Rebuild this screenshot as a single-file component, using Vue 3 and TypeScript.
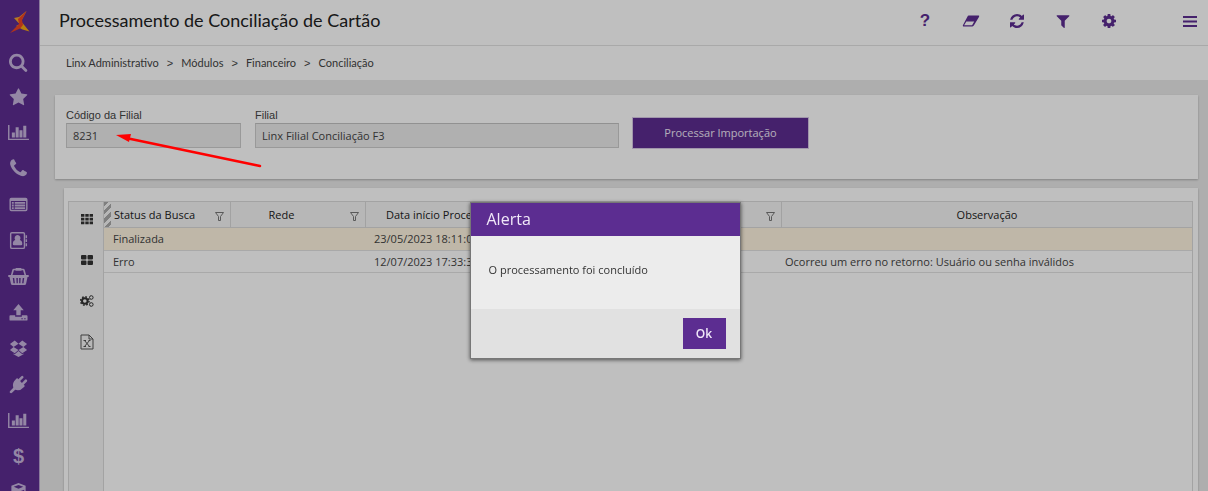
<script setup lang="ts">
import { ref } from 'vue'

interface Glyph {
  box: string
  d: string
  text?: string
}

const glyphs: Record<string, Glyph> = {
  search: {
    box: '64 64 1728 1728',
    d: 'M1216 832q0-185-131.5-316.5t-316.5-131.5-316.5 131.5-131.5 316.5 131.5 316.5 316.5 131.5 316.5-131.5 131.5-316.5zm512 832q0 52-38 90t-90 38q-54 0-90-38l-343-342q-179 124-399 124-143 0-273.5-55.5t-225-150-150-225-55.5-273.5 55.5-273.5 150-225 225-150 273.5-55.5 273.5 55.5 225 150 150 225 55.5 273.5q0 220-124 399l343 343q37 37 37 90z',
  },
  star: {
    box: '0 0 1792 1792',
    d: 'M1728 647q0 22-26 48l-363 354 86 500q1 7 1 20 0 21-10.5 35.5t-30.5 14.5q-19 0-40-12l-449-236-449 236q-22 12-40 12-21 0-31.5-14.5t-10.5-35.5q0-6 2-20l86-500-364-354q-25-27-25-48 0-37 56-46l502-73 225-455q19-41 49-41t49 41l225 455 502 73q56 9 56 46z',
  },
  chart: {
    box: '0 0 22 20',
    d: 'M0 2H1.5V16.5H22V18H0ZM4 10H7.200V15.300H4ZM8 4.500H11.200V15.300H8ZM12 7.500H15.200V15.300H12ZM16 3H19.200V15.300H16Z',
  },
  phone: {
    box: '100 100 1592 1592',
    d: 'M1600 1240q0 27-10 70.5t-21 68.5q-21 50-122 106-94 51-186 51-27 0-53-3.5t-57.5-12.5-47-14.5-55.5-20.5-49-18q-98-35-175-83-127-79-264-216t-216-264q-48-77-83-175-3-9-18-49t-20.5-55.5-14.5-47-12.5-57.5-3.500-53q0-92 51-186 56-101 106-122 25-11 68.500-21t70.500-10q14 0 21 3 18 6 53 76 11 19 30 54t35 63.500 31 53.500q3 4 17.500 25t21.500 35.500 7 28.500q0 20-28.500 50t-62 55-62 53-28.500 46q0 9 5 22.500t8.500 20.500 14 24 11.500 19q76 137 174 235t235 174q2 1 19 11.500t24 14 20.500 8.500 22.500 5q18 0 46-28.500t53-62 55-62 50-28.500q14 0 28.500 7t35.500 21.500 25 17.500q25 15 53.500 31t63.500 35 54 30q70 35 76 53 3 7 3 21z',
  },
  list: {
    box: '0 0 20 20',
    d: 'M2.500 3H17.500Q19.500 3 19.500 5V15Q19.500 17 17.500 17H2.500Q.5 17 .5 15V5Q.5 3 2.500 3ZM2 6.300V15Q2 15.500 2.500 15.500H17.500Q18 15.500 18 15V6.300ZM3 7.300H5V9.200H3ZM6 7.300H17V9.200H6ZM3 10.100H5V12H3ZM6 10.100H17V12H6ZM3 12.900H5V14.800H3ZM6 12.900H17V14.800H6Z',
  },
  contacts: {
    box: '0 0 20 20',
    d: 'M3 1H15Q17 1 17 3V17Q17 19 15 19H3Q1 19 1 17V3Q1 1 3 1ZM2.500 3V17Q2.500 17.500 3 17.500H15Q15.500 17.500 15.500 17V3Q15.500 2.500 15 2.500H3Q2.500 2.500 2.500 3ZM9 4.300A3.200 3.200 0 0 1 11.400 9.500Q14 10 14 13.700Q14 15 12.700 15H5.300Q4 15 4 13.700Q4 10 6.600 9.500A3.200 3.200 0 0 1 9 4.300ZM17.500 4.500H19V7.500H17.500ZM17.500 8.700H19V11.700H17.500ZM17.500 13H19V16H17.500Z',
  },
  basket: {
    box: '0 0 22 20',
    d: 'M8.500 1H13.500Q14 1 14.300 1.800H16Q17 1.800 17.500 3L19 8.500H21Q22 8.500 22 9.500T21 10.500H20.500L19 17.500Q18.700 19 17.500 19H4.500Q3.300 19 3 17.500L1.500 10.500H1Q0 10.500 0 9.500T1 8.500H3L4.500 3Q5 1.800 6 1.800H7.700Q8 1 8.500 1ZM6.200 3.300L4.700 8.500H17.300L15.800 3.300H14.300Q14 4 13.500 4H8.500Q8 4 7.700 3.300ZM5 11.500L5.700 17H7.200L6.500 11.500ZM8.700 11.500L9 17H10.300V11.500ZM11.700 11.500V17H13L13.300 11.500ZM15.500 11.500L14.800 17H16.300L17 11.500Z',
  },
  upload: {
    box: '0 0 20 20',
    d: 'M10 1L15.500 7.500H12.300V13H7.700V7.500H4.500ZM1.500 13H6.500V14.500H13.500V13H18.500Q19.500 13 19.500 14V17.500Q19.500 18.500 18.500 18.500H1.500Q.5 18.500 .5 17.500V14Q.5 13 1.500 13ZM13 16V17H14.500V16ZM16 16V17H17.500V16Z',
  },
  boxes: {
    box: '0 0 20 20',
    d: 'M6 1.500L10 5L4.800 8.300L1 5.300ZM14 1.500L19 5.300L15.200 8.300L10 5ZM4.800 8.300L10 11.700L6 15L1 11.500ZM15.200 8.300L19 11.500L14 15L10 11.700ZM6 16L10 12.700L14 16L15.300 15.200V16L10 19L4.700 16V15.200Z',
  },
  plug: {
    box: '0 0 20 20',
    d: 'M18.700 5.100A1.300 1.300 0 0 1 18.700 7L15.500 10.200L16.800 11.500L15.500 12.800Q11.500 17.300 6.500 15.500L3.200 18.800Q2.500 19.300 1.500 19L.8 18.500Q.5 17.500 1.200 16.800L4.500 13.500Q2.800 8.500 7.200 4.500L8.500 3.200L9.800 4.500L13 1.300A1.300 1.300 0 0 1 14.900 3.200L11.700 6.400L13.600 8.300L16.800 5.100A1.300 1.300 0 0 1 18.700 5.100Z',
  },
  dollar: { box: '0 0 20 20', d: '', text: '$' },
  cube: {
    box: '0 0 20 20',
    d: 'M10 0L17.500 3V14L10 19L2.500 14V3ZM10 2L5 4L10 6L15 4ZM11 9V16L16 13V7Z',
  },
  help: { box: '0 0 20 20', d: '', text: '?' },
  eraser: {
    box: '0 0 20 20',
    d: 'M7.500 4H18.500Q19.500 4 19 5.200L13.500 14.500Q12.700 16 11.500 16H1.500Q.5 16 1 14.800L6 5.200Q6.500 4 7.500 4ZM4.800 10.500L2.400 14.800H11.200L13.600 10.500Z',
  },
  refresh: {
    box: '128 128 1536 1536',
    d: 'M1639 1056q0 5-1 7-64 268-268 434.5t-478 166.5q-146 0-282.5-55t-243.5-157l-129 129q-19 19-45 19t-45-19-19-45v-448q0-26 19-45t45-19h448q26 0 45 19t19 45-19 45l-137 137q71 66 161 102t187 36q134 0 250-65t186-179q11-17 53-117 8-23 30-23h192q13 0 22.500 9.500t9.500 22.500zm25-800v448q0 26-19 45t-45 19h-448q-26 0-45-19t-19-45 19-45l138-138q-148-137-349-137-134 0-250 65t-186 179q-11 17-53 117-8 23-30 23h-199q-13 0-22.500-9.500t-9.500-22.500v-7q65-268 270-434.500t480-166.500q146 0 284 55.500t245 156.500l130-129q19-19 45-19t45 19 19 45z',
  },
  filter: {
    box: '128 128 1536 1536',
    d: 'M1595 295q17 41-14 70l-493 493v742q0 42-39 59-13 5-25 5-27 0-45-19l-256-256q-19-19-19-45v-486l-493-493q-31-29-14-70 17-39 59-39h1280q42 0 59 39z',
  },
  cog: {
    box: '128 128 1536 1536',
    d: 'M1152 896q0-106-75-181t-181-75-181 75-75 181 75 181 181 75 181-75 75-181zm512-109v222q0 12-8 23t-20 13l-185 28q-19 54-39 91 35 50 107 138 10 12 10 25t-9 23q-27 37-99 108t-94 71q-12 0-26-9l-138-108q-44 23-91 38-16 136-29 186-7 28-36 28h-222q-14 0-24.500-8.500t-11.500-21.500l-28-184q-49-16-90-37l-141 107q-10 9-25 9-14 0-25-11-126-114-165-168-7-10-7-23 0-12 8-23 15-21 51-66.500t54-70.500q-27-50-41-99l-183-27q-13-2-21-12.500t-8-23.500v-222q0-12 8-23t19-13l186-28q14-46 39-92-40-57-107-138-10-12-10-24 0-10 9-23 26-36 98.500-107.500t94.500-71.500q13 0 26 10l138 107q44-23 91-38 16-136 29-186 7-28 36-28h222q14 0 24.500 8.500t11.500 21.500l28 184q49 16 90 37l142-107q9-9 24-9 13 0 25 10 129 119 165 170 7 8 7 22 0 12-8 23-15 21-51 66.500t-54 70.500q26 50 41 98l183 28q13 2 21 12.500t8 23.500z',
  },
}

const sideItems = [
  { icon: 'search', label: 'Pesquisar' },
  { icon: 'star', label: 'Favoritos' },
  { icon: 'chart', label: 'Indicadores' },
  { icon: 'phone', label: 'Contato' },
  { icon: 'list', label: 'Cadastros' },
  { icon: 'contacts', label: 'Clientes' },
  { icon: 'basket', label: 'Compras' },
  { icon: 'upload', label: 'Envio' },
  { icon: 'boxes', label: 'Estoque' },
  { icon: 'plug', label: 'Integrações' },
  { icon: 'chart', label: 'Relatórios' },
  { icon: 'dollar', label: 'Financeiro' },
  { icon: 'cube', label: 'Produtos' },
]

const actions = [
  { icon: 'help', label: 'Ajuda' },
  { icon: 'eraser', label: 'Limpar' },
  { icon: 'refresh', label: 'Atualizar' },
  { icon: 'filter', label: 'Filtrar' },
  { icon: 'cog', label: 'Configurar' },
]

const crumbs = ['Linx Administrativo', 'Módulos', 'Financeiro', 'Conciliação']

const columns = [
  { title: 'Status da Busca', cls: 'c-status', filter: true },
  { title: 'Rede', cls: 'c-rede', filter: true },
  { title: 'Data início Proce', cls: 'c-date', filter: true },
  { title: '', cls: 'c-date', filter: true },
  { title: 'Observação', cls: 'c-obs', filter: false },
]

const rows = [
  { status: 'Finalizada', rede: '', inicio: '23/05/2023 18:11:0', fim: '', obs: '', selected: true },
  {
    status: 'Erro',
    rede: '',
    inicio: '12/07/2023 17:33:3',
    fim: '',
    obs: 'Ocorreu um erro no retorno: Usuário ou senha inválidos',
    selected: false,
  },
]

const codigo = ref('8231')
const filial = ref('Linx Filial Conciliação F3')
const alertOpen = ref(true)
</script>

<template>
  <div class="app">
    <nav class="side" aria-label="Módulos">
      <a href="#" class="logo" aria-label="Linx">
        <svg viewBox="0 0 20 22" width="20" height="22">
          <path d="M16.500 0L9 6L4 7L8.500 12L10.500 11.500Z" fill="#f5a52c" />
          <path d="M6 15L12.500 18.500L19.500 20.500L12.500 12Z" fill="#f5a814" />
          <path d="M16.500 0L8 8L9 13L0 22L10 17.500L13 14L12 9Z" fill="#ee4423" />
        </svg>
      </a>
      <a v-for="(s, i) in sideItems" :key="i" href="#" class="side-item" :aria-label="s.label">
        <span v-if="glyphs[s.icon].text" class="side-char">{{ glyphs[s.icon].text }}</span>
        <svg v-else :viewBox="glyphs[s.icon].box" class="side-icon" :class="{ wide: s.icon === 'chart' || s.icon === 'basket' }">
          <path :d="glyphs[s.icon].d" fill-rule="evenodd" />
        </svg>
      </a>
    </nav>

    <div class="page">
      <header class="top">
        <h1>Processamento de Conciliação de Cartão</h1>
        <div class="actions">
          <button v-for="a in actions" :key="a.icon" type="button" class="action" :aria-label="a.label">
            <span v-if="glyphs[a.icon].text">{{ glyphs[a.icon].text }}</span>
            <svg v-else :viewBox="glyphs[a.icon].box" :class="{ big: a.icon === 'eraser' }">
              <path :d="glyphs[a.icon].d" fill-rule="evenodd" />
            </svg>
          </button>
          <button type="button" class="action menu" aria-label="Menu">
            <svg viewBox="0 0 14 14"><path d="M0 2H14V4H0ZM0 6.500H14V8.500H0ZM0 11H14V13H0Z" /></svg>
          </button>
        </div>
      </header>

      <nav class="crumbs" aria-label="Navegação">
        <template v-for="(c, i) in crumbs" :key="c">
          <span v-if="i" class="sep">&gt;</span>
          <a href="#">{{ c }}</a>
        </template>
      </nav>

      <main>
        <form class="card form" @submit.prevent>
          <div class="field code">
            <label for="codigo">Código da Filial</label>
            <input id="codigo" v-model="codigo" type="text" readonly />
          </div>
          <div class="field name">
            <label for="filial">Filial</label>
            <input id="filial" v-model="filial" type="text" readonly />
          </div>
          <button type="submit" class="primary">Processar Importação</button>
        </form>

        <section class="card results">
          <div class="grid">
            <div class="tools">
              <button type="button" aria-label="Grade">
                <svg viewBox="0 0 14 12" width="14" height="12">
                  <path d="M1 1h3.400v2.800h-3.400zM5.300 1h3.400v2.800h-3.400zM9.600 1h3.400v2.800h-3.400zM1 4.700h3.400v2.800h-3.400zM5.300 4.700h3.400v2.800h-3.400zM9.600 4.700h3.400v2.800h-3.400zM1 8.400h3.400v2.800h-3.400zM5.300 8.400h3.400v2.800h-3.400zM9.600 8.400h3.400v2.800h-3.400z" />
                </svg>
              </button>
              <button type="button" aria-label="Blocos">
                <svg viewBox="0 0 14 12" width="14" height="12">
                  <path d="M2 1H5.500Q6.500 1 6.500 2V4.500Q6.500 5.500 5.500 5.500H2Q1 5.500 1 4.500V2Q1 1 2 1ZM8.500 1H12Q13 1 13 2V4.500Q13 5.500 12 5.500H8.500Q7.500 5.500 7.500 4.500V2Q7.500 1 8.500 1ZM2 6.500H5.500Q6.500 6.500 6.500 7.500V10Q6.500 11 5.500 11H2Q1 11 1 10V7.500Q1 6.500 2 6.500ZM8.500 6.500H12Q13 6.500 13 7.500V10Q13 11 12 11H8.500Q7.500 11 7.500 10V7.500Q7.500 6.500 8.500 6.500Z" />
                </svg>
              </button>
              <button type="button" aria-label="Opções">
                <svg viewBox="0 0 14 14" width="14" height="14" fill="none">
                  <circle cx="4.800" cy="7" r="2.800" class="ln thick" />
                  <circle cx="4.800" cy="7" r="4.200" class="ln teeth" />
                  <circle cx="11.300" cy="3.500" r="1.800" class="ln" />
                  <circle cx="11.300" cy="10.500" r="1.800" class="ln" />
                </svg>
              </button>
              <button type="button" aria-label="Exportar Excel">
                <svg viewBox="0 0 14 16" width="14" height="16" fill="none">
                  <path d="M1 1H9L13 5V15H1ZM9 1V5H13" class="ln soft" />
                  <path d="M4.500 6.500L9.500 12.500M9.500 6.500L4.500 12.500M3.500 6.500H6M8.500 6.500H10.500M3.500 12.500H6M8.500 12.500H10.500" class="ln soft" />
                </svg>
              </button>
            </div>
            <div class="table-wrap">
              <table>
                <colgroup>
                  <col v-for="(c, i) in columns" :key="i" :class="c.cls" />
                </colgroup>
                <thead>
                  <tr>
                    <th v-for="(c, i) in columns" :key="i" scope="col" :class="{ first: i === 0, start: c.cls === 'c-date' }">
                      <div class="head">
                        <span>{{ c.title }}</span>
                        <svg v-if="c.filter" viewBox="0 0 9 9" width="9" height="9">
                          <path d="M.5 .5H8.500L5.500 4.500V8.500H3.500V4.500Z" />
                        </svg>
                      </div>
                    </th>
                  </tr>
                </thead>
                <tbody>
                  <tr v-for="r in rows" :key="r.status" :class="{ selected: r.selected }">
                    <td class="status">{{ r.status }}</td>
                    <td>{{ r.rede }}</td>
                    <td class="date">{{ r.inicio }}</td>
                    <td>{{ r.fim }}</td>
                    <td>{{ r.obs }}</td>
                  </tr>
                </tbody>
              </table>
            </div>
          </div>
        </section>
      </main>
    </div>

    <div v-if="alertOpen" class="shade">
      <div class="dialog" role="alertdialog" aria-modal="true" aria-labelledby="alert-title">
        <h2 id="alert-title">Alerta</h2>
        <p>O processamento foi concluído</p>
        <footer>
          <button type="button" @click="alertOpen = false">Ok</button>
        </footer>
      </div>
    </div>

    <svg class="arrow" viewBox="0 0 150 40" width="150" height="40" aria-hidden="true">
      <path d="M12 8L146 36" />
      <polygon points="2,5 17,4 15,12" />
    </svg>
  </div>
</template>

<style>
body {
  margin: 0;
}
</style>

<style scoped>
.app {
  position: relative;
  display: flex;
  height: 100vh;
  overflow: hidden;
  background: #e9e9e9;
  font: 11px/16px "Open Sans", "Noto Sans", sans-serif;
  color: #444;
}
a {
  text-decoration: none;
  color: inherit;
}
button {
  border: 0;
  padding: 0;
  background: none;
  font: inherit;
  color: inherit;
  cursor: pointer;
}
.side {
  flex: none;
  width: 39px;
  background: #5c2d91;
  border-right: 1px solid #b9a3cf;
  overflow: hidden;
}
.logo {
  display: flex;
  align-items: center;
  justify-content: center;
  height: 44px;
}
.side-item {
  display: flex;
  align-items: center;
  justify-content: center;
  height: 36px;
  margin-bottom: -1px;
  padding-right: 2px;
  color: #c6b4dc;
}
.side-item:nth-child(n + 4) {
  margin-bottom: 0;
}
.side-icon {
  width: 19px;
  height: 19px;
  fill: currentColor;
}
.side-icon.wide {
  width: 21px;
  height: 19px;
}
.side-char {
  font: bold 20px/36px "Liberation Sans", sans-serif;
}
.page {
  flex: 1;
  min-width: 0;
  display: flex;
  flex-direction: column;
}
.top {
  flex: none;
  display: flex;
  align-items: center;
  justify-content: space-between;
  height: 45px;
  padding: 0 11px 0 19px;
  background: #fff;
  border-bottom: 1px solid #e2e2e2;
}
h1 {
  margin: 0;
  padding-bottom: 5px;
  font: 400 18px/28px Lato, sans-serif;
  color: #222;
  white-space: nowrap;
}
.actions {
  display: flex;
  align-items: center;
  gap: 26px;
  padding-bottom: 3px;
}
.action {
  display: flex;
  align-items: center;
  justify-content: center;
  width: 20px;
  height: 20px;
  color: #5c2d91;
  font: bold 17px/20px "Liberation Sans", sans-serif;
}
.action svg {
  width: 14px;
  height: 14px;
  fill: currentColor;
}
.action svg.big {
  width: 18px;
  height: 18px;
}
.menu {
  margin-left: 38px;
  width: 14px;
}
.crumbs {
  flex: none;
  display: flex;
  align-items: center;
  gap: 8px;
  height: 34px;
  padding-left: 26px;
  background: #fff;
  font: 11px/16px Lato, sans-serif;
}
.sep {
  font-family: "Liberation Sans", sans-serif;
}
main {
  flex: 1;
  min-height: 0;
  display: flex;
  flex-direction: column;
  gap: 9px;
  padding: 15px 10px 0 15px;
}
.card {
  background: #fff;
  box-shadow: 0 1px 2px rgba(0, 0, 0, 0.25);
}
.form {
  flex: none;
  display: flex;
  align-items: flex-start;
  gap: 14px;
  padding: 12px 11px 31px;
}
.field {
  display: flex;
  flex-direction: column;
}
.code {
  width: 175px;
}
.name {
  width: 364px;
}
label {
  font: 11px/16px "Liberation Sans", Arial, sans-serif;
}
input {
  box-sizing: border-box;
  width: 100%;
  height: 25px;
  padding: 0 6px;
  border: 1px solid #ccc;
  border-top-color: #c2c2c2;
  border-radius: 0;
  background: #ebebeb;
  font: inherit;
  color: #444;
  outline: none;
}
.primary {
  width: 175px;
  height: 30px;
  margin-top: 11px;
  background: #5c2d91;
  color: #f0e8f8;
  box-shadow: 0 0 0 1px #d6c8e4;
  font-weight: 500;
}
.results {
  flex: 1;
  min-height: 0;
  display: flex;
  margin-left: 9px;
  padding: 13px 5px 0 4px;
}
.grid {
  flex: 1;
  min-width: 0;
  display: flex;
  border: 1px solid #dadada;
  border-bottom: 0;
}
.tools {
  flex: none;
  display: flex;
  flex-direction: column;
  width: 34px;
  border-right: 1px solid #dadada;
  background: #f5f5f5;
}
.tools button {
  display: flex;
  align-items: center;
  justify-content: center;
  height: 34px;
  margin-bottom: 7px;
  padding-left: 2px;
}
.tools svg {
  fill: #333;
}
.tools .ln {
  fill: none;
  stroke: #333;
  stroke-width: 1;
}
.tools .soft {
  stroke: #555;
}
.tools .thick {
  stroke-width: 2;
}
.tools .teeth {
  stroke-width: 1.500;
  stroke-dasharray: 1.650 1.650;
}
.table-wrap {
  flex: 1;
  min-width: 0;
}
table {
  width: 100%;
  table-layout: fixed;
  border-collapse: separate;
  border-spacing: 0;
}
.c-status {
  width: 127px;
}
.c-rede {
  width: 135px;
}
.c-date {
  width: 208px;
}
th {
  box-sizing: border-box;
  height: 26px;
  padding: 0;
  background: #f5f5f5;
  border-right: 1px solid #d8d8d8;
  border-bottom: 1px solid #dadada;
  color: #222;
  font-weight: 400;
}
th:last-child {
  border-right: 0;
}
.head {
  display: flex;
  align-items: center;
  height: 25px;
}
.head span {
  flex: 1;
  min-width: 0;
  text-align: center;
  white-space: nowrap;
}
.start .head span {
  padding-left: 20px;
  text-align: left;
}
.head svg {
  flex: none;
  margin: 3px 6px 0 18px;
  fill: none;
  stroke: #777;
  stroke-width: 1;
}
.first .head::before {
  content: "";
  width: 7px;
  height: 25px;
  background: repeating-linear-gradient(135deg, #aaa 0 3px, #f5f5f5 3px 6px);
}
.first .head span {
  padding-left: 3px;
  text-align: left;
}
td {
  box-sizing: border-box;
  height: 22px;
  padding: 0 3px;
  border-bottom: 1px solid #e2e2e2;
  white-space: nowrap;
}
.date {
  padding-left: 8px;
}
.status {
  padding-left: 9px;
}
.selected td {
  height: 23px;
  background: #fff5e0;
}
.shade {
  position: fixed;
  inset: 0;
  display: flex;
  justify-content: center;
  align-items: flex-start;
  padding: 203px 0 0 2px;
  background: rgba(0, 0, 0, 0.25);
}
.dialog {
  width: 269px;
  background: #ececec;
  box-shadow: 0 0 0 1px #777, 0 1px 4px 1px rgba(0, 0, 0, 0.6);
}
h2 {
  margin: 0;
  padding: 4px 16px 5px;
  background: #5c2d91;
  color: #f0e8f8;
  font: 400 16px/24px "Open Sans", sans-serif;
}
p {
  margin: 0;
  padding: 26px 18px 31px;
  color: #333;
}
.dialog footer {
  display: flex;
  justify-content: flex-end;
  padding: 9px 14px;
  background: #e1e1e1;
}
.dialog button {
  width: 43px;
  height: 31px;
  background: #5c2d91;
  color: #f0e8f8;
  font: 600 12px/16px "Open Sans", sans-serif;
}
.arrow {
  position: absolute;
  left: 114px;
  top: 130px;
  pointer-events: none;
}
.arrow path {
  fill: none;
  stroke: #f00;
  stroke-width: 2.500;
  stroke-linecap: round;
}
.arrow polygon {
  fill: #f00;
}
</style>
